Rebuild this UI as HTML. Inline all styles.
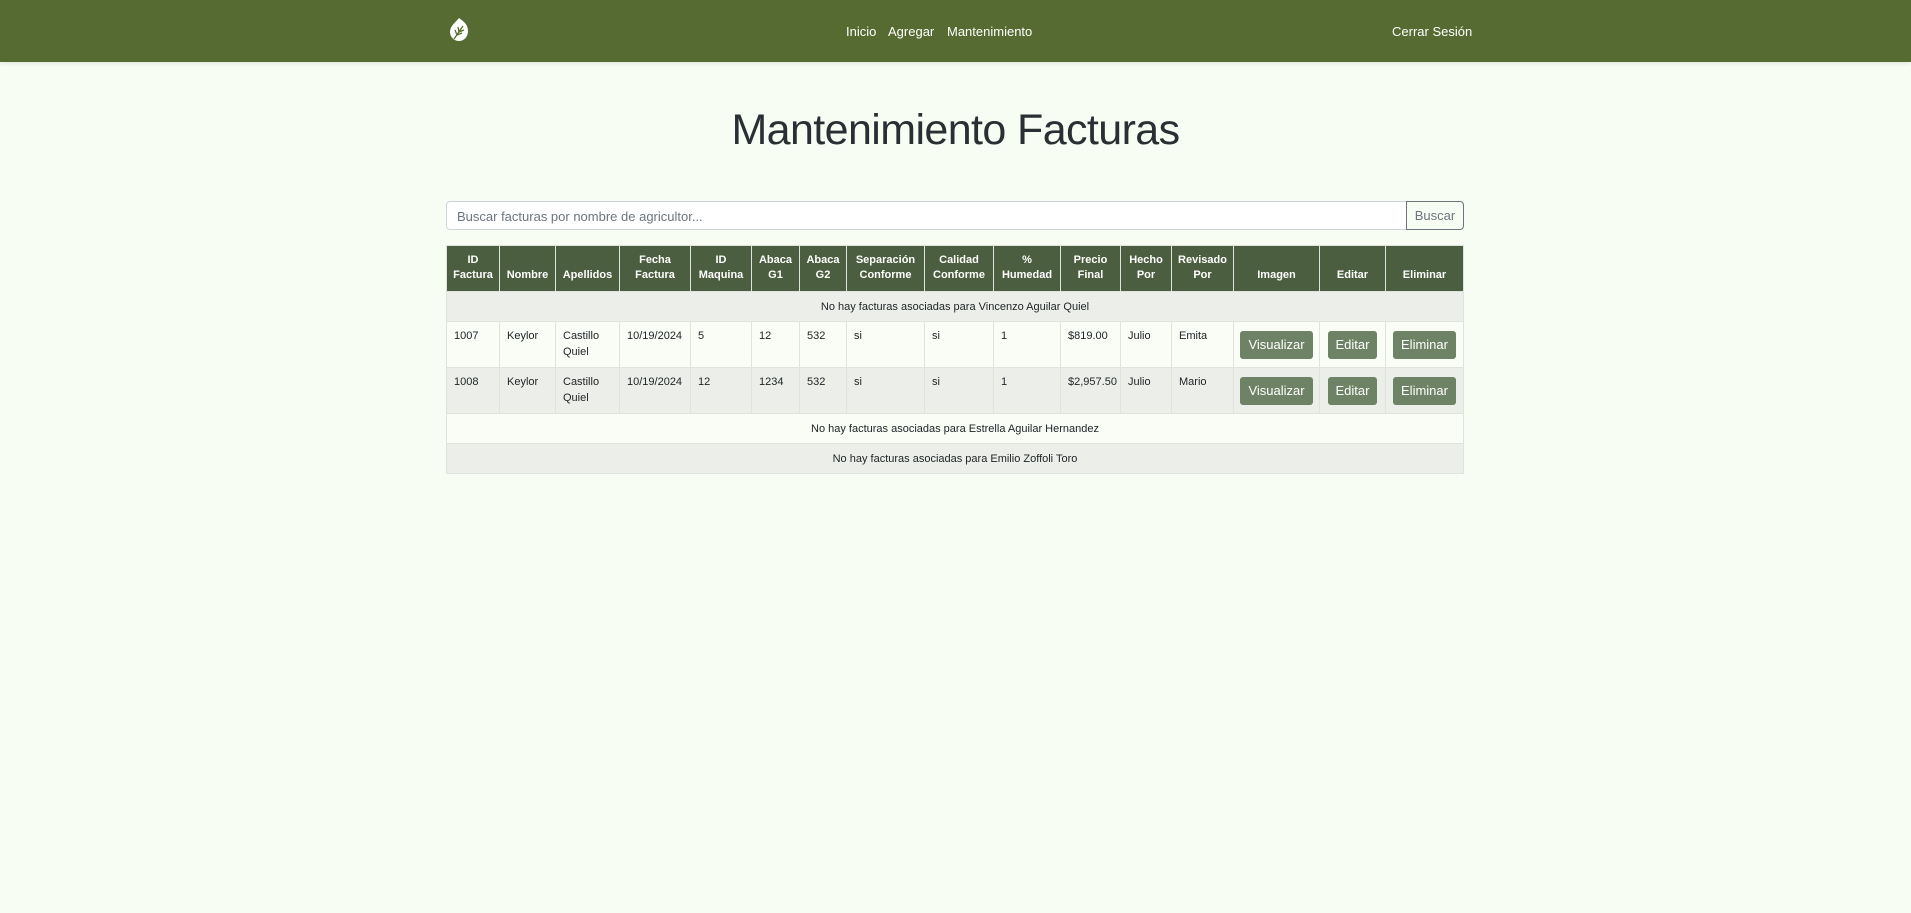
<!DOCTYPE html>
<html><head><meta charset="utf-8"><style>
*{box-sizing:border-box;margin:0;padding:0}
body{width:1911px;height:913px;background:#f7fdf3;font-family:"Liberation Sans",sans-serif;color:#212529;position:relative;overflow:hidden}
.nav{position:absolute;left:0;top:0;width:1911px;height:62px;background:#566b31;box-shadow:0 2px 4px rgba(0,0,0,.08)}
.nav a{position:absolute;top:24px;color:#fff;font-size:13px;text-decoration:none}
h1{position:absolute;left:0;width:1911px;top:106px;text-align:center;font-weight:300;font-size:43px;color:#2a2f34;letter-spacing:-0.6px}
.search{position:absolute;left:446px;top:201px;width:961px;height:29px;border:1px solid #ced4da;border-radius:4px 0 0 4px;background:#fff;font-size:13px;color:#6c757d;padding:7px 10px}
.btn-s{position:absolute;left:1406px;top:201px;width:58px;height:29px;border:1px solid #6c757d;border-radius:0 4px 4px 0;font-size:13px;color:#6c757d;text-align:center;line-height:27px}
table{position:absolute;left:446px;top:245px;width:1018px;border-collapse:collapse;font-size:11px;table-layout:fixed}
th{background:#4b5e3f;color:#fff;font-weight:bold;height:46px;text-align:center;vertical-align:bottom;padding:0 2px 8px;border:1px solid #dfe3dc;line-height:15px}
td{border:1px solid #dfe3dc;padding:6px 7px;vertical-align:top;line-height:16px}
tr.e td{background:#ecefe9}
tr.o td{background:#f9fdf6}
td.c{text-align:center;vertical-align:middle;padding:0;height:30px}
tr.d td{height:46px}
.b{display:inline-block;background:#6e8365;color:#fff;font-size:13px;border-radius:3px;padding:0 8px;height:28px;line-height:28px}
td.bt{text-align:center;vertical-align:middle;padding:0}
</style></head><body>
<div class="nav">
<svg style="position:absolute;left:448px;top:16px" width="22" height="27" viewBox="0 0 22 27"><path d="M11 2 C15 5 20 8 20 15 C20 21 16 25 11 25 C6 25 2 21 2 16 C2 10 7 7 11 2Z" fill="#fff"/><path d="M6 23 L15 10 M9 19 L7 14 M9 19 L14 17 M11 16 L10 11 M11 16 L16 14" stroke="#566b31" stroke-width="1.3" fill="none"/></svg>
<a style="left:846px">Inicio</a><a style="left:888px">Agregar</a><a style="left:947px">Mantenimiento</a>
<a style="left:1392px">Cerrar Sesión</a>
</div>
<h1>Mantenimiento Facturas</h1>
<div class="search">Buscar facturas por nombre de agricultor...</div>
<div class="btn-s">Buscar</div>
<table>
<colgroup><col style="width:53px"><col style="width:56px"><col style="width:64px"><col style="width:71px"><col style="width:61px"><col style="width:48px"><col style="width:47px"><col style="width:78px"><col style="width:69px"><col style="width:67px"><col style="width:60px"><col style="width:51px"><col style="width:62px"><col style="width:86px"><col style="width:66px"><col style="width:78px"></colgroup>
<tr><th>ID<br>Factura</th><th>Nombre</th><th>Apellidos</th><th>Fecha<br>Factura</th><th>ID<br>Maquina</th><th>Abaca<br>G1</th><th>Abaca<br>G2</th><th>Separación<br>Conforme</th><th>Calidad<br>Conforme</th><th>%<br>Humedad</th><th>Precio<br>Final</th><th>Hecho<br>Por</th><th>Revisado<br>Por</th><th>Imagen</th><th>Editar</th><th>Eliminar</th></tr>
<tr class="e"><td class="c" colspan="16">No hay facturas asociadas para Vincenzo Aguilar Quiel</td></tr>
<tr class="o d"><td>1007</td><td>Keylor</td><td>Castillo Quiel</td><td>10/19/2024</td><td>5</td><td>12</td><td>532</td><td>si</td><td>si</td><td>1</td><td>$819.00</td><td>Julio</td><td>Emita</td><td class="bt"><span class="b">Visualizar</span></td><td class="bt"><span class="b">Editar</span></td><td class="bt"><span class="b">Eliminar</span></td></tr>
<tr class="e d"><td>1008</td><td>Keylor</td><td>Castillo Quiel</td><td>10/19/2024</td><td>12</td><td>1234</td><td>532</td><td>si</td><td>si</td><td>1</td><td>$2,957.50</td><td>Julio</td><td>Mario</td><td class="bt"><span class="b">Visualizar</span></td><td class="bt"><span class="b">Editar</span></td><td class="bt"><span class="b">Eliminar</span></td></tr>
<tr class="o"><td class="c" colspan="16">No hay facturas asociadas para Estrella Aguilar Hernandez</td></tr>
<tr class="e"><td class="c" colspan="16">No hay facturas asociadas para Emilio Zoffoli Toro</td></tr>
</table>
</body></html>
